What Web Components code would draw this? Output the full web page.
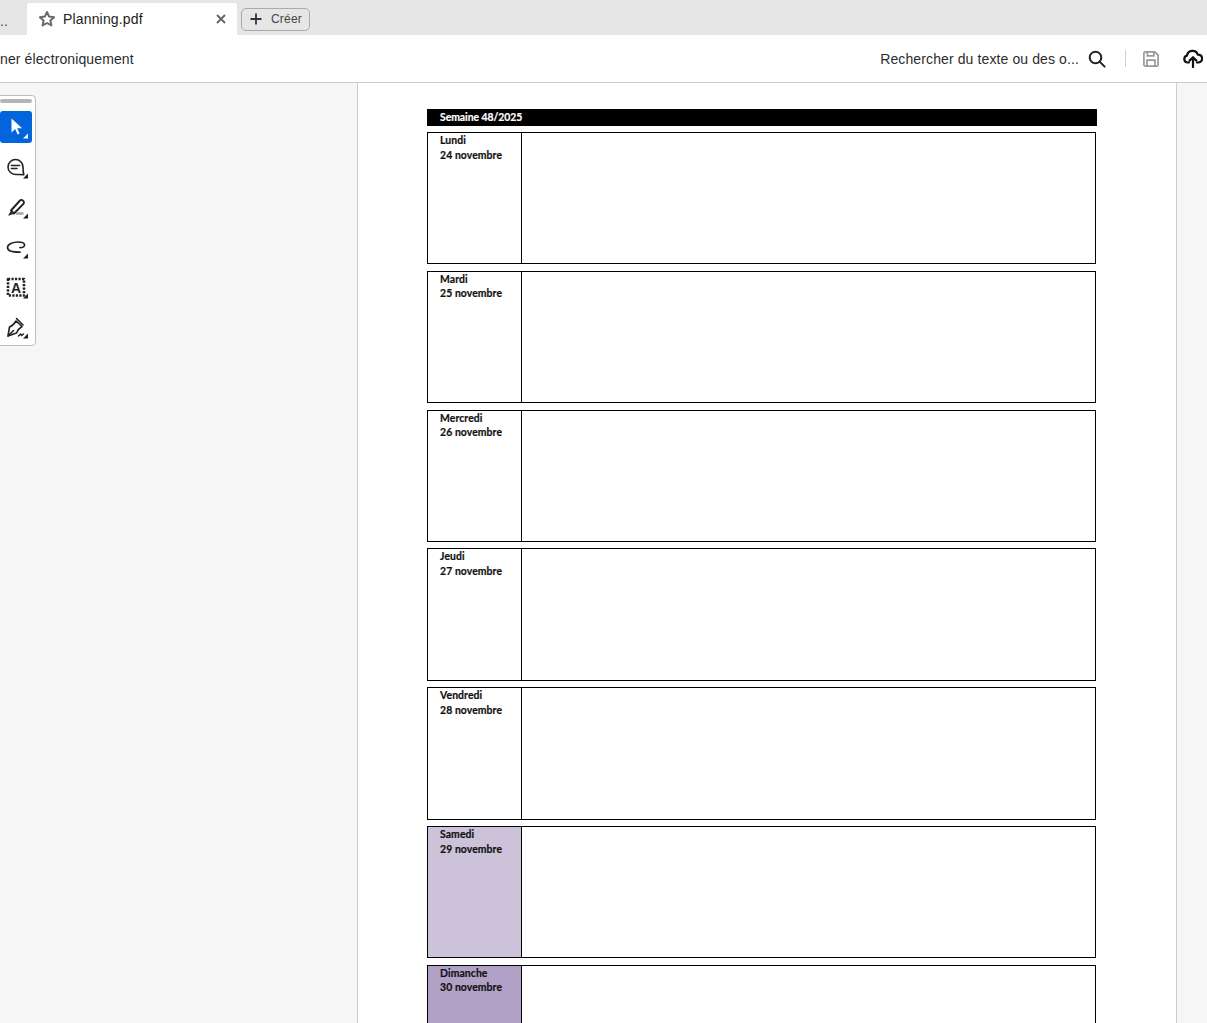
<!DOCTYPE html>
<html lang="fr">
<head>
<meta charset="utf-8">
<title>Planning.pdf</title>
<style>
    html, body { margin: 0; height: 100%; overflow: hidden; background: #f6f6f6; }
    body { display: flex; flex-direction: column; font-family: "Liberation Sans", Arial, sans-serif; color: #222; }
</style>
</head>
<body>
<app-tabbar></app-tabbar>
<app-toolbar></app-toolbar>
<pdf-viewer>
    <tool-rail slot="rail"></tool-rail>
    <pdf-page title-text="Semaine 48/2025">
        <day-row name="Lundi" date="24 novembre"></day-row>
        <day-row name="Mardi" date="25 novembre"></day-row>
        <day-row name="Mercredi" date="26 novembre"></day-row>
        <day-row name="Jeudi" date="27 novembre"></day-row>
        <day-row name="Vendredi" date="28 novembre"></day-row>
        <day-row name="Samedi" date="29 novembre" tint="#ccc3da"></day-row>
        <day-row name="Dimanche" date="30 novembre" tint="#b2a1c7"></day-row>
    </pdf-page>
</pdf-viewer>

<script>
// barre des onglets
class AppTabbar extends HTMLElement {
    constructor() {
        super();
        const shadow = this.attachShadow({mode: 'open'});
        shadow.innerHTML = `
            <style>
                :host { display: flex; height: 35px; background: #e6e6e6; flex: none; align-items: flex-end; overflow: hidden; }
                .prev { width: 25px; height: 32px; box-sizing: border-box; padding: 10px 0 0 0; font-size: 14px; color: #555; margin-right: 2px; }
                .tab { width: 210px; height: 32px; background: #fff; border-radius: 3px 3px 0 0; display: flex; align-items: center; box-sizing: border-box; padding: 0 10px 0 11px; }
                .tab span { font-size: 14px; letter-spacing: .16px; color: #222; margin-left: 7px; flex: 1; }
                .create { height: 23px; width: 69px; margin: 4px 0 1px 4px; align-self: center; box-sizing: border-box; border: 1px solid #aaa; border-radius: 5px; display: flex; align-items: center; padding-left: 8px; gap: 9px; font-size: 12px; letter-spacing: .2px; color: #444; }
                svg { display: block; flex: none; }
            </style>
            <div class="prev">..</div>
            <div class="tab">
                <svg width="18" height="18" viewBox="0 0 18 18" fill="none" stroke="#6a6a6a" stroke-width="2" stroke-linejoin="round"><path d="M9 2l2.100 4.600 5 .6-3.700 3.400 1 4.900L9 13l-4.400 2.500 1-4.900L1.900 7.200l5-.6z"/></svg>
                <span>Planning.pdf</span>
                <svg width="12" height="12" viewBox="0 0 12 12" stroke="#666" stroke-width="1.9"><path d="M2 2l8 8M10 2l-8 8"/></svg>
            </div>
            <div class="create">
                <svg width="12" height="12" viewBox="0 0 12 12" stroke="#333" stroke-width="1.8"><path d="M6 .5v11M.5 6h11"/></svg>
                <span>Créer</span>
            </div>
        `;
    }
}

// barre d'outils
class AppToolbar extends HTMLElement {
    constructor() {
        super();
        const shadow = this.attachShadow({mode: 'open'});
        shadow.innerHTML = `
            <style>
                :host { display: flex; height: 48px; box-sizing: border-box; background: #fff; border-bottom: 1px solid #ccc; flex: none; align-items: center; font-size: 14px; letter-spacing: .11px; color: #2c2c2c; }
                .grow { flex: 1; }
                .search { margin-right: 9px; }
                .sep { width: 1px; height: 17px; background: #d0d0d0; margin: 0 17px 0 19px; }
                svg { display: block; flex: none; }
            </style>
            <span>ner électroniquement</span>
            <div class="grow"></div>
            <span class="search">Rechercher du texte ou des o...</span>
            <svg width="18" height="18" viewBox="0 0 18 18" fill="none" stroke="#222" stroke-width="2"><circle cx="7.500" cy="7.500" r="5.800"/><path d="M11.600 11.600l5 5" stroke-linecap="round"/></svg>
            <div class="sep"></div>
            <svg width="16" height="16" viewBox="0 0 16 16" fill="none" stroke="#999" stroke-width="1.7"><path d="M2.200.9h9.600l3.300 3.200v9.700a1.300 1.300 0 0 1-1.300 1.300H2.200a1.300 1.300 0 0 1-1.300-1.300V2.200A1.300 1.300 0 0 1 2.200.9z"/><path d="M4.400 1v3.800h6.400V1M4 15V9.200h8V15"/></svg>
            <svg style="margin-left:24px;margin-right:4px" width="20" height="19" viewBox="0 0 20 19" fill="none" stroke="#111" stroke-width="2.200" stroke-linecap="round" stroke-linejoin="round"><path d="M6 13.500H4.600A3.500 3.500 0 0 1 4 6.600 5.600 5.600 0 0 1 14.800 5.600 3.900 3.900 0 0 1 15.600 13.500H14"/><path d="M10 18V8.500M6.600 11.600L10 8.200l3.400 3.400"/></svg>
        `;
    }
}

// zone de lecture
class PdfViewer extends HTMLElement {
    constructor() {
        super();
        const shadow = this.attachShadow({mode: 'open'});
        shadow.innerHTML = `
            <style>
                :host { display: flex; flex: 1; min-height: 0; position: relative; background: #f6f6f6; overflow: hidden; }
                .left { width: 357px; flex: none; }
                .paper { width: 820px; flex: none; box-sizing: border-box; background: #fff; border-left: 1px solid #ccc; border-right: 1px solid #ccc; padding: 26px 0 0 69px; }
                .rail { position: absolute; left: -6px; top: 12px; }
            </style>
            <div class="left"></div>
            <div class="paper"><slot></slot></div>
            <div class="rail"><slot name="rail"></slot></div>
        `;
    }
}

// palette d'outils flottante
class ToolRail extends HTMLElement {
    constructor() {
        super();
        const shadow = this.attachShadow({mode: 'open'});
        const corner = (c) => `<path d="M28 22.500v5h-5z" fill="${c}" stroke="none"/>`;
        const icons = [
            `<path d="M11.500 7.500v14l3.600-3.400 2.600 5.400 1.900-.9-2.500-5.300h5z" fill="#fff" stroke="none"/>`,
            `<path d="M15.500 8.500a7.500 7.500 0 0 1 7.500 7.500c0 3 .2 5.800.8 7.800-2.200-.5-5-.4-8.300-.3a7.500 7.500 0 0 1 0-15z" stroke-width="1.600"/><path d="M11.500 14.500h8M11.500 17.500h5.500" stroke-width="1.600"/>`,
            `<path d="M11 19.500L20 9.500a1.800 1.800 0 0 1 2.600-.1l.8.8a1.800 1.800 0 0 1 0 2.600L14 22.500z"/><path d="M10.500 20.500l3 2.500-5.500 1.800z" fill="#222" stroke="none"/><path d="M16 22.500h7.500" stroke="#a8a8a8" stroke-width="2.600" stroke-linecap="butt"/>`,
            `<path d="M20 16.500c3 .3 5-1 4.500-3-.5-2-3-2.500-6.500-2.500-5 0-10.500 2-10.500 5.500 0 3.500 5.500 4.700 12.500 4.700" stroke-width="1.700"/>`,
            `<path d="M8 8h16v16.500H8z" stroke-dasharray="2.200 1.300" stroke-width="2.600" stroke-linecap="butt"/><text x="16" y="21.500" text-anchor="middle" font-family="Liberation Sans, sans-serif" font-weight="700" font-size="14" fill="#222" stroke="none">A</text>`,
            `<path d="M8 25l1.500-9c3-1 5-3.500 6.500-6l6 5.500c-2.500 1.500-4.500 3.700-5.500 6.500z" stroke-width="1.600"/><path d="M8 25l5.500-5.500" stroke-width="1.600"/><path d="M16.500 7.500l6.500 6.500" stroke-width="1.600"/><path d="M18.500 25l2-2 1.200 1.500 1.800-1.500" stroke-width="1.500"/>`
        ];
        shadow.innerHTML = `
            <style>
                :host { display: block; }
                .box { width: 42px; height: 251px; box-sizing: border-box; background: #fff; border: 1px solid #bdbdbd; border-radius: 4px; padding: 3px 3px 0 5px; }
                .grip { height: 4px; background: #b5b5b5; border-radius: 2px; margin: 0 0 8px 0; }
                .list { display: flex; flex-direction: column; gap: 8px; }
                .btn { width: 32px; height: 32px; border-radius: 3px; }
                .btn.on { background: #0265dc; }
                svg { display: block; fill: none; stroke: #222; stroke-width: 1.900; stroke-linecap: round; stroke-linejoin: round; }
            </style>
            <div class="box">
                <div class="grip"></div>
                <div class="list">
                    ${icons.map((d, i) => `<div class="btn ${i === 0 ? 'on' : ''}"><svg width="32" height="32" viewBox="0 0 32 32">${d}${corner(i === 0 ? '#fff' : '#222')}</svg></div>`).join('')}
                </div>
            </div>
        `;
    }
}

// page du planning
class PdfPage extends HTMLElement {
    constructor() {
        super();
        const shadow = this.attachShadow({mode: 'open'});
        shadow.innerHTML = `
            <style>
                :host { display: block; width: 670px; font-family: Lato, "Open Sans", sans-serif; font-weight: 700; font-size: 10.4px; letter-spacing: .1px; -webkit-text-stroke: .2px currentColor; color: #111; }
                .title { height: 17px; background: #000; color: #fff; box-sizing: border-box; padding-left: 13px; line-height: 17px; margin-bottom: 6px; letter-spacing: -.03px; }
                .rows { display: flex; flex-direction: column; gap: 6.430px; }
            </style>
            <div class="title"></div>
            <div class="rows"><slot></slot></div>
        `;
        shadow.querySelector('.title').textContent = this.getAttribute('title-text');
    }
}

// une ligne par jour
class DayRow extends HTMLElement {
    constructor() {
        super();
        const shadow = this.attachShadow({mode: 'open'});
        shadow.innerHTML = `
            <style>
                :host { display: block; height: 132.400px; }
                .row { display: flex; height: 100%; width: 669px; box-sizing: border-box; border: 1px solid #000; }
                .label { width: 94px; flex: none; box-sizing: border-box; border-right: 1px solid #000; padding: 0 0 0 12px; line-height: 14.600px; background: var(--cell-bg, transparent); }
                .label div { white-space: nowrap; }
                .content { flex: 1; }
            </style>
            <div class="row">
                <div class="label"><div class="name"></div><div class="date"></div></div>
                <div class="content"></div>
            </div>
        `;
        shadow.querySelector('.name').textContent = this.getAttribute('name');
        shadow.querySelector('.date').textContent = this.getAttribute('date');
        if (this.hasAttribute('tint')) this.style.setProperty('--cell-bg', this.getAttribute('tint'));
    }
}

customElements.define('app-tabbar', AppTabbar);
customElements.define('app-toolbar', AppToolbar);
customElements.define('pdf-viewer', PdfViewer);
customElements.define('tool-rail', ToolRail);
customElements.define('pdf-page', PdfPage);
customElements.define('day-row', DayRow);
</script>
</body>
</html>
